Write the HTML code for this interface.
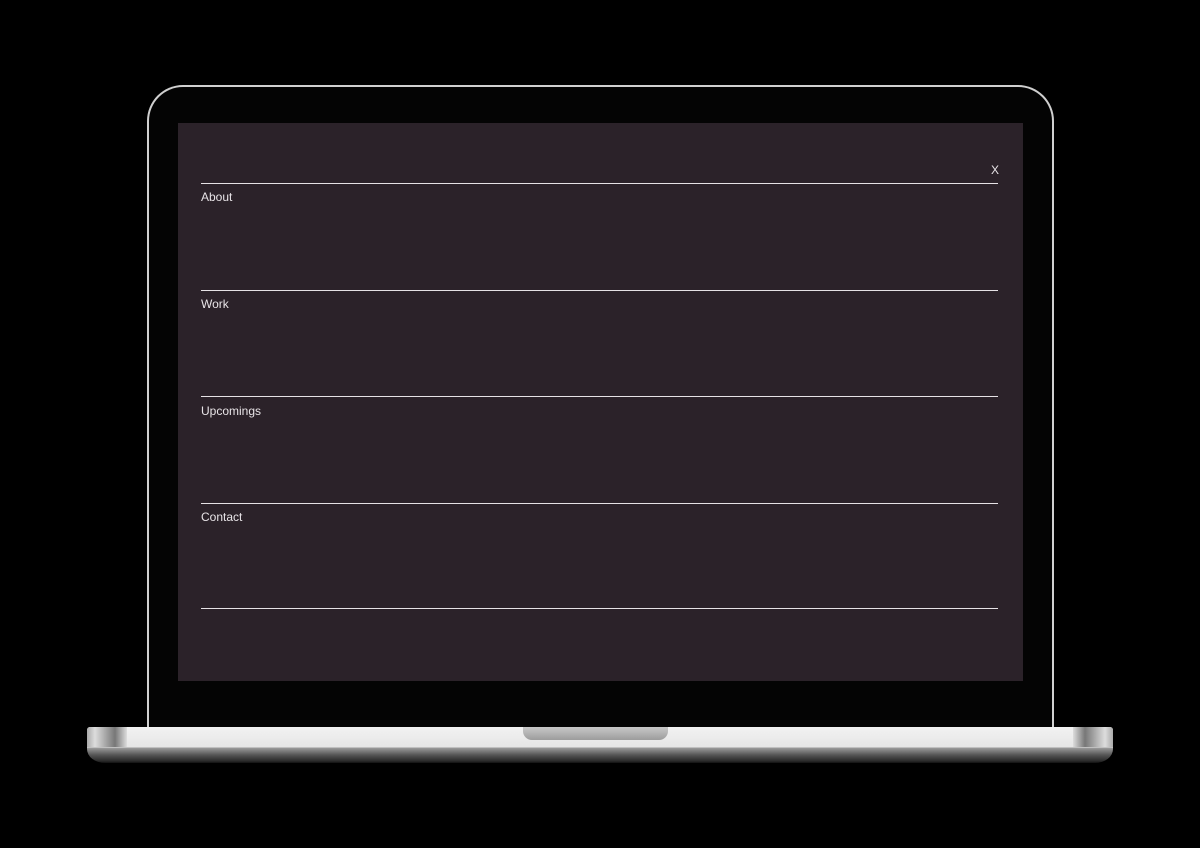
<!DOCTYPE html>
<html><head><meta charset="utf-8"><style>
html,body{margin:0;padding:0;background:#000;width:1200px;height:848px;overflow:hidden;font-family:"Liberation Sans",sans-serif}
.lid{position:absolute;left:147px;top:85px;width:907px;height:650px;border-radius:36px 36px 0 0;background:#040404;border:2px solid #d0d0d0;border-bottom:none;box-sizing:border-box}
.screen{position:absolute;left:178px;top:123px;width:845px;height:558px;background:#2b2229}
.line{position:absolute;left:23px;width:797px;height:1px;background:#e6e2e5}
.lbl{position:absolute;left:23px;color:#e8e4e7;font-size:12px}
.x{position:absolute;left:813px;top:40px;color:#e8e4e7;font-size:12px}
.base{position:absolute;left:87px;top:727px;width:1026px;height:36px;border-radius:3px 3px 18px 18px/3px 3px 14px 14px;background:linear-gradient(#f2f2f2 0,#e6e6e6 20px,#9a9a9a 21px,#555 28px,#2a2a2a 34px,#111 36px)}
.base:before{content:"";position:absolute;left:0;top:0;width:40px;height:20px;background:linear-gradient(90deg,#aaa,#ddd 8px,#777 28px,#ddd 40px);border-radius:3px 0 0 0}
.base:after{content:"";position:absolute;right:0;top:0;width:40px;height:20px;background:linear-gradient(270deg,#aaa,#ddd 8px,#777 28px,#ddd 40px);border-radius:0 3px 0 0}
.notch{position:absolute;left:523px;top:727px;width:145px;height:13px;background:linear-gradient(#c8c8c8,#9c9c9c);border-radius:0 0 9px 9px}
</style></head><body>
<div class="lid"></div>
<div class="screen">
<div class="x">X</div>
<div class="line" style="top:60px"></div>
<div class="lbl" style="top:67px">About</div>
<div class="line" style="top:167px"></div>
<div class="lbl" style="top:174px">Work</div>
<div class="line" style="top:273px"></div>
<div class="lbl" style="top:281px">Upcomings</div>
<div class="line" style="top:380px"></div>
<div class="lbl" style="top:387px">Contact</div>
<div class="line" style="top:485px"></div>
</div>
<div class="base"></div>
<div class="notch"></div>
</body></html>
